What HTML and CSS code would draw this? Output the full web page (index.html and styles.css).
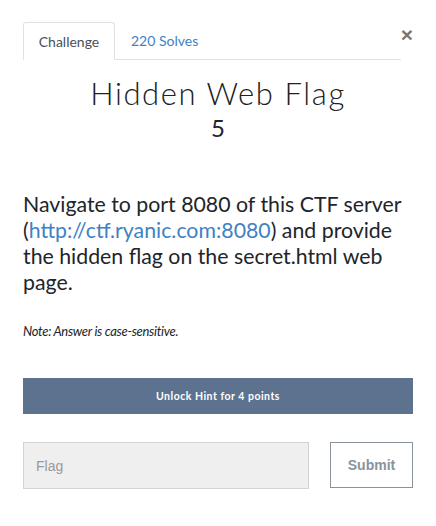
FILE: index.html
```html
<!DOCTYPE html>
<html>
<head>
<meta charset="utf-8">
<link rel="stylesheet" href="styles.css">
</head>
<body>
<div class="modal">
  <div class="header">
    <ul class="tabs">
      <li class="tab active">Challenge</li>
      <li class="tab">220 Solves</li>
    </ul>
    <span class="close">&times;</span>
  </div>
  <h2 class="title">Hidden Web Flag</h2>
  <h4 class="value">5</h4>
  <p class="desc">Navigate to port 8080 of this CTF server (<a href="#">http://ctf.ryanic.com:8080</a>) and provide the hidden flag on the secret.html web page.</p>
  <p class="note">Note: Answer is case-sensitive.</p>
  <div class="hint">Unlock Hint for 4 points</div>
  <div class="submit-row">
    <div class="flag">Flag</div>
    <div class="submit">Submit</div>
  </div>
</div>
</body>
</html>
```

FILE: styles.css
```css
html, body {
  margin: 0;
  padding: 0;
  background: #fff;
}
.modal {
  width: 390px;
  padding: 22px 23px 0 23px;
  font-family: Lato, "Open Sans", sans-serif;
  color: #212529;
}
.header {
  display: flex;
  align-items: flex-start;
}
.tabs {
  list-style: none;
  margin: 0;
  padding: 0;
  display: flex;
  width: 378px;
  border-bottom: 1px solid #dee2e6;
  height: 37px;
}
.tab {
  font-size: 14px;
  padding: 0 16px;
  line-height: 37px;
  color: #3d82c4;
}
.tab.active {
  color: #495057;
  background: #fff;
  border: 1px solid #dee2e6;
  border-bottom-color: #fff;
  border-radius: 3px 3px 0 0;
  line-height: 37px;
  box-sizing: border-box;
  width: 92px;
  text-align: center;
  padding: 0;
  margin-bottom: -1px;
  height: 38px;
}
.close {
  margin-left: auto;
  margin-top: 2px;
  font-size: 21px;
  font-weight: 700;
  line-height: 21px;
  color: #777;
  font-family: "Liberation Sans", Arial, sans-serif;
}
.title {
  margin: 14px 0 0;
  text-align: center;
  font-weight: 300;
  font-size: 31px;
  letter-spacing: 1.6px;
  line-height: 38px;
  color: #202020;
}
.value {
  margin: 1px 0 0;
  text-align: center;
  font-weight: 400;
  font-size: 24px;
  line-height: 30px;
}
.desc {
  margin: 48px 0 0;
  font-size: 21.3px;
  line-height: 26px;
  color: #212529;
}
.desc a {
  color: #3d82c4;
  text-decoration: none;
}
.note {
  margin: 28px 0 0;
  font-size: 13px;
  font-style: italic;
  letter-spacing: -0.3px;
}
.hint {
  margin-top: 39px;
  height: 36px;
  background: #5c728f;
  color: #fff;
  font-size: 10.5px;
  font-weight: 700;
  letter-spacing: 0.5px;
  display: flex;
  align-items: center;
  justify-content: center;
}
.submit-row {
  display: flex;
  justify-content: space-between;
  margin-top: 28px;
}
.flag {
  width: 286px;
  height: 47px;
  box-sizing: border-box;
  background: #efefef;
  border: 1px solid #ced4da;
  font-family: "Liberation Sans", Arial, sans-serif;
  font-size: 14px;
  color: #999;
  padding-left: 12px;
  display: flex;
  align-items: center;
}
.submit {
  width: 83px;
  height: 46px;
  box-sizing: border-box;
  border: 1px solid #8a939c;
  font-family: "Liberation Sans", Arial, sans-serif;
  font-size: 14px;
  font-weight: 700;
  color: #8a939c;
  display: flex;
  align-items: center;
  justify-content: center;
}
```
